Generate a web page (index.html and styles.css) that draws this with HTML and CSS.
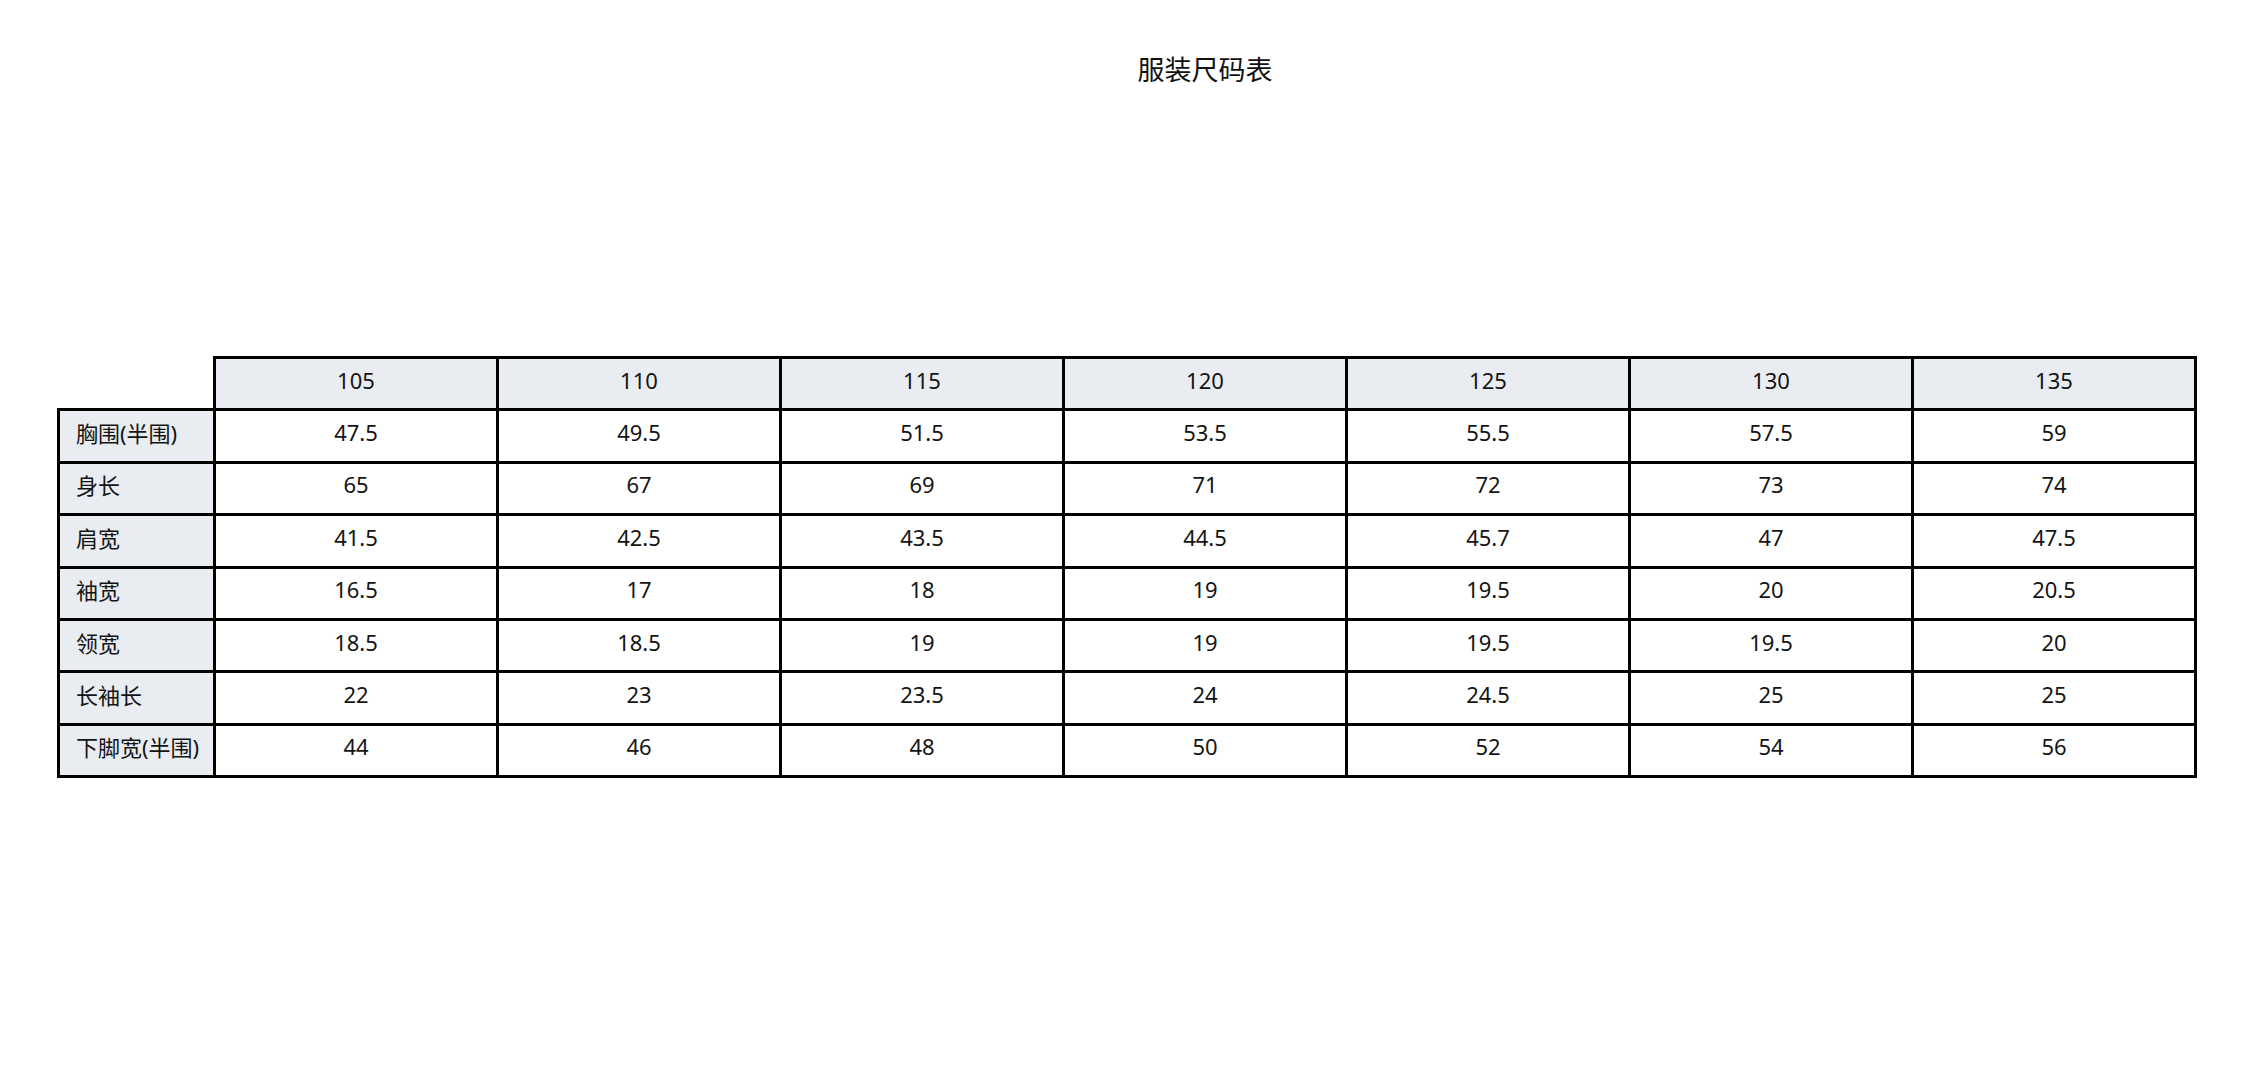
FILE: index.html
```html
<!DOCTYPE html>
<html lang="zh-CN">
<head>
<meta charset="utf-8">
<title>服装尺码表</title>
<link rel="stylesheet" href="styles.css">
</head>
<body>
<div class="page">
  <h1 class="title">服装尺码表</h1>
  <table class="size-table">
    <colgroup>
      <col class="col-label">
      <col><col><col><col><col><col><col>
    </colgroup>
    <thead>
      <tr>
        <th class="corner"></th>
        <th>105</th><th>110</th><th>115</th><th>120</th><th>125</th><th>130</th><th>135</th>
      </tr>
    </thead>
    <tbody>
      <tr><th class="label">胸围(半围)</th><td>47.5</td><td>49.5</td><td>51.5</td><td>53.5</td><td>55.5</td><td>57.5</td><td>59</td></tr>
      <tr><th class="label">身长</th><td>65</td><td>67</td><td>69</td><td>71</td><td>72</td><td>73</td><td>74</td></tr>
      <tr><th class="label">肩宽</th><td>41.5</td><td>42.5</td><td>43.5</td><td>44.5</td><td>45.7</td><td>47</td><td>47.5</td></tr>
      <tr><th class="label">袖宽</th><td>16.5</td><td>17</td><td>18</td><td>19</td><td>19.5</td><td>20</td><td>20.5</td></tr>
      <tr><th class="label">领宽</th><td>18.5</td><td>18.5</td><td>19</td><td>19</td><td>19.5</td><td>19.5</td><td>20</td></tr>
      <tr><th class="label">长袖长</th><td>22</td><td>23</td><td>23.5</td><td>24</td><td>24.5</td><td>25</td><td>25</td></tr>
      <tr><th class="label">下脚宽(半围)</th><td>44</td><td>46</td><td>48</td><td>50</td><td>52</td><td>54</td><td>56</td></tr>
    </tbody>
  </table>
</div>
</body>
</html>
```

FILE: styles.css
```css
html, body {
  margin: 0;
  padding: 0;
  background: #ffffff;
}

body {
  font-family: "Noto Sans", "Noto Sans CJK SC", sans-serif;
  color: #141414;
}

.page {
  padding: 50px 57px 0 57px;
}

.title {
  margin: 0 0 266px 0;
  padding-left: 156px;
  height: 40px;
  line-height: 40px;
  text-align: center;
  font-size: 27px;
  font-weight: 400;
  color: #111111;
}

.size-table {
  width: 100%;
  border-collapse: collapse;
  table-layout: fixed;
  font-size: 22px;
}

.col-label {
  width: 156px;
}

.size-table th,
.size-table td {
  box-sizing: border-box;
  height: 52.4px;
  padding: 0 0 8px 0;
  border: 3px solid #000000;
  text-align: center;
  vertical-align: middle;
  font-weight: 400;
  background: #ffffff;
}

.size-table thead th {
  background: #e9ecf0;
}

.size-table thead th.corner {
  border: none;
  background: transparent;
}

.size-table th.label {
  text-align: left;
  padding-left: 16px;
  background: #e9ecf0;
  white-space: nowrap;
}
```
